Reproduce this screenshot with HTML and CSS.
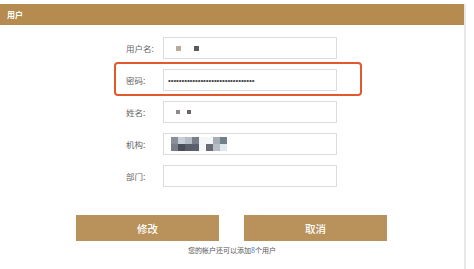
FILE: index.html
```html
<!DOCTYPE html>
<html lang="zh-CN">
<head>
    <meta charset="UTF-8">
    <meta name="viewport" content="width=device-width, initial-scale=1.0">
    <title>用户</title>
    <link rel="stylesheet" href="styles.css">
</head>
<body>
    <div class="panel">
        <div class="panel-title">用户</div>

        <div class="form">
            <div class="row">
                <span class="label">用户名:</span>
                <div class="field">
                    <span class="blur" style="background:#b9aa9c"></span>
                    <span class="blur gap8" style="background:#5a5a5e"></span>
                </div>
            </div>

            <div class="row marked">
                <span class="label">密码:</span>
                <div class="field dots">••••••••••••••••••••••••••••••••</div>
            </div>

            <div class="row">
                <span class="label">姓名:</span>
                <div class="field">
                    <span class="blur small" style="background:#8e8a8a"></span>
                    <span class="blur small gap4" style="background:#6e6468"></span>
                </div>
            </div>

            <div class="row">
                <span class="label">机构:</span>
                <div class="field">
                    <div class="mosaic">
                        <span style="background:#8a8e96"></span>
                        <span style="background:#c7d0da"></span>
                        <span style="background:#b6bcc6"></span>
                        <span style="background:#7a8088"></span>
                        <span style="background:#f4f6f8"></span>
                        <span style="background:#f4f6f8"></span>
                        <span style="background:#a8aeb6"></span>
                        <span style="background:#6e8088"></span>
                        <span style="background:#7a7e88"></span>
                        <span style="background:#4a4e58"></span>
                        <span style="background:#5a5e66"></span>
                        <span style="background:#5c606a"></span>
                        <span style="background:#f4f6f8"></span>
                        <span style="background:#6a6c74"></span>
                        <span style="background:#b8bcc4"></span>
                        <span style="background:#e0e8ee"></span>
                    </div>
                </div>
            </div>

            <div class="row">
                <span class="label">部门:</span>
                <div class="field"></div>
            </div>
        </div>

        <div class="actions">
            <button class="btn">修改</button>
            <button class="btn">取消</button>
        </div>

        <p class="note">您的帐户还可以添加<span class="num">8</span>个用户</p>
    </div>
</body>
</html>
```

FILE: styles.css
```css
/* General Reset */
* {
    margin: 0;
    padding: 0;
    box-sizing: border-box;
    font-family: 'Noto Sans CJK SC', 'Liberation Sans', sans-serif;
}

body {
    background: #fff;
    padding-top: 4px;
}

.panel {
    width: 466px;
    height: 265px;
    border-right: 2px solid #e8e8e8;
}

.panel-title {
    height: 21px;
    background: #b68b50;
    color: #fff;
    font-size: 8px;
    font-weight: bold;
    line-height: 21px;
    padding-left: 7px;
}

.form {
    display: flex;
    flex-direction: column;
    gap: 10px;
    padding: 12px 0 0 126px;
}

.row {
    display: flex;
    align-items: center;
    position: relative;
    width: 211px;
}

/* red annotation box drawn over the password row */
.row.marked::after {
    content: "";
    position: absolute;
    top: -7px;
    bottom: -5px;
    left: -12px;
    right: -25px;
    border: 2px solid #e2582f;
    border-radius: 4px;
}

.label {
    width: 37px;
    font-size: 8.5px;
    color: #666;
}

.field {
    width: 174px;
    height: 22px;
    border: 1px solid #dcdcdc;
    display: flex;
    align-items: center;
    padding-left: 12px;
}

.blur {
    display: inline-block;
    width: 5px;
    height: 5px;
}

.blur.small {
    width: 4px;
    height: 4px;
}

.gap8 {
    margin-left: 13px;
}

.gap4 {
    margin-left: 7px;
}

.dots {
    padding-left: 4px;
    font-family: 'Liberation Sans', sans-serif;
    font-size: 8px;
    color: #444;
    letter-spacing: -0.1px;
}

.mosaic {
    display: grid;
    grid-template-columns: repeat(8, 7px);
    grid-template-rows: 7px 7px;
    margin-left: -5px;
}

.actions {
    display: flex;
    gap: 25px;
    padding: 28px 0 0 76px;
}

.btn {
    width: 143px;
    height: 26px;
    border: none;
    background: #b9915a;
    color: #fff;
    font-size: 10.5px;
    font-weight: 500;
}

.note {
    margin-top: 4px;
    padding-left: 188px;
    font-size: 7px;
    color: #555;
}

.num {
    color: #3a7bd5;
}
```
